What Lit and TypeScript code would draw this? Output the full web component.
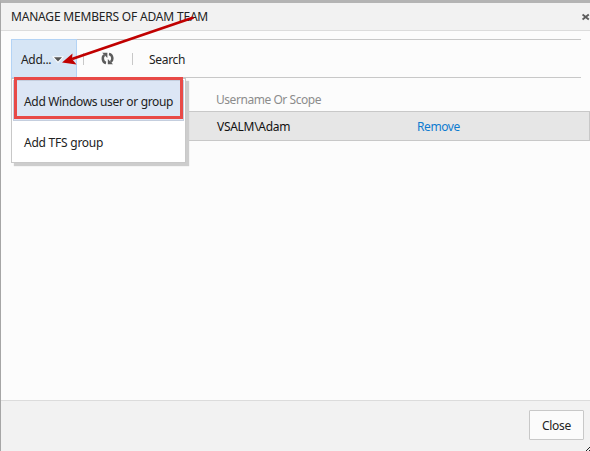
import { LitElement, html, css, svg } from "lit";
import { customElement } from "lit/decorators.js";

const refreshIcon = svg`
  <path d="M5 11 C1.2 10.2 0.9 4.4 3.6 3" fill="none" stroke="#5c5c5c" stroke-width="2.5"/>
  <path d="M1.2 0.8 H6.4 V6 Z" fill="#5c5c5c"/>
  <path d="M8 2 C12 2.8 12.2 8.4 9.6 10" fill="none" stroke="#5c5c5c" stroke-width="2.5"/>
  <path d="M6.8 7 V12.2 H12 Z" fill="#5c5c5c"/>`;

@customElement("app-root")
export class AppRoot extends LitElement {
  static styles = css`
    :host {
      display: block;
      width: 590px;
      height: 451px;
      overflow: hidden;
      font: 12px/16px "Noto Sans", "Open Sans", sans-serif;
      color: #222;
    }
    * { box-sizing: border-box; }
    svg { display: block; flex: none; }
    .dialog {
      position: relative;
      height: 451px;
      display: flex;
      flex-direction: column;
      background: #fcfcfc;
      border-left: 1px solid #a6a6a6;
      border-top: 3px solid #b4b4b4;
    }
    .title {
      height: 28px;
      flex: none;
      display: flex;
      align-items: center;
      justify-content: space-between;
      padding-left: 10px;
      background: #f2f2f2;
      border-bottom: 1px solid #dcdcdc;
      overflow: hidden;
    }
    .title span { letter-spacing: -0.19px; white-space: nowrap; }
    .toolbar {
      height: 39px;
      flex: none;
      margin: 8px 9px 0 10px;
      display: flex;
      align-items: center;
      border-top: 1px solid #c8c8c8;
      border-bottom: 1px solid #c8c8c8;
    }
    .add {
      width: 66px;
      height: 39px;
      flex: none;
      display: flex;
      align-items: center;
      padding: 2px 0 0 9px;
      gap: 1px;
      background: #d6e5f5;
      border: 1px solid #b3d3f5;
    }
    .add span { width: 30px; white-space: nowrap; letter-spacing: -0.3px; }
    .sep { width: 1px; height: 12px; background: #c8c8c8; flex: none; margin-left: 6px; }
    .refresh { margin-left: 17px; }
    .sep.second { margin-left: 18px; }
    .search { margin-left: 16px; padding-top: 2px; letter-spacing: -0.3px; }
    .head {
      height: 33px;
      flex: none;
      padding: 14px 0 0 215px;
      color: #8c8c8c;
      letter-spacing: -0.45px;
    }
    .row {
      height: 30px;
      flex: none;
      margin-left: 10px;
      display: flex;
      align-items: center;
      padding: 2px 0 0 205px;
      background: #e6e6e6;
      border: 1px solid #c8c8c8;
      color: #111;
      letter-spacing: -0.3px;
    }
    .row .name { width: 200px; }
    .row .remove { color: #0e7bd0; letter-spacing: -0.4px; }
    .footer {
      height: 51px;
      flex: none;
      margin-top: auto;
      display: flex;
      justify-content: flex-end;
      padding: 9px 6px 0 0;
      background: #f2f2f2;
      border-top: 1px solid #dcdcdc;
    }
    .close {
      width: 55px;
      height: 30px;
      display: flex;
      align-items: center;
      justify-content: center;
      padding-top: 2px;
      background: #fbfbfb;
      border: 1px solid #c8c8c8;
      border-radius: 1px;
      letter-spacing: -0.3px;
    }
    .menu {
      position: absolute;
      left: 10px;
      top: 75px;
      width: 175px;
      height: 85px;
      padding: 1px;
      background: #fff;
      border: 1px solid #c8c8c8;
      box-shadow: 3px 3px 1px #cdcdcd;
      white-space: nowrap;
    }
    .item {
      height: 41px;
      display: flex;
      align-items: center;
      padding: 2px 0 0 10px;
      border: 1px solid transparent;
      letter-spacing: -0.24px;
    }
    .item.active { background: #dce6f5; border-color: #c4cede; letter-spacing: -0.33px; }
    .highlight {
      position: absolute;
      left: 13px;
      top: 74px;
      width: 169px;
      height: 42px;
      border: 3px solid #e84a47;
    }
    .arrow { position: absolute; left: -1px; top: -3px; pointer-events: none; }
    .grip { position: absolute; right: 0; bottom: 0; }
  `;

  render() {
    return html`
      <div class="dialog">
        <div class="title">
          <span>MANAGE MEMBERS OF ADAM TEAM</span>
          <svg width="8" height="8" viewBox="0 0 8 8">
            <path d="M0.5 1.5 L6.8 6.5 M6.8 1.5 L0.5 6.5" stroke="#5c5c5c" stroke-width="1.9"/>
          </svg>
        </div>
        <div class="toolbar">
          <div class="add">
            <span>Add...</span>
            <svg width="12" height="7" viewBox="0 0 12 7">
              <path d="M0 0.5 H12 L6 7 Z" fill="#fff"/>
              <path d="M2 1.2 H10 L6 5.4 Z" fill="#555"/>
            </svg>
          </div>
          <div class="sep"></div>
          <svg class="refresh" width="13" height="13" viewBox="0 0 13 13">${refreshIcon}</svg>
          <div class="sep second"></div>
          <div class="search">Search</div>
        </div>
        <div class="head">Username Or Scope</div>
        <div class="row"><span class="name">VSALM\\Adam</span><span class="remove">Remove</span></div>
        <div class="footer"><div class="close">Close</div></div>
        <div class="menu">
          <div class="item active">Add Windows user or group</div>
          <div class="item">Add TFS group</div>
        </div>
        <div class="highlight"></div>
        <svg class="arrow" width="590" height="100" viewBox="0 0 590 100">
          <path d="M193.5 17.5 L72 59" stroke="#c00000" stroke-width="2.8"/>
          <path d="M62 62.5 L72.5 53.5 L72 59 L76.5 64.5 Z" fill="#c00000"/>
        </svg>
        <svg class="grip" width="4" height="4" viewBox="0 0 4 4"><path d="M0 4 L4 0 M3 4 L4 3" stroke="#222"/></svg>
      </div>
    `;
  }
}
